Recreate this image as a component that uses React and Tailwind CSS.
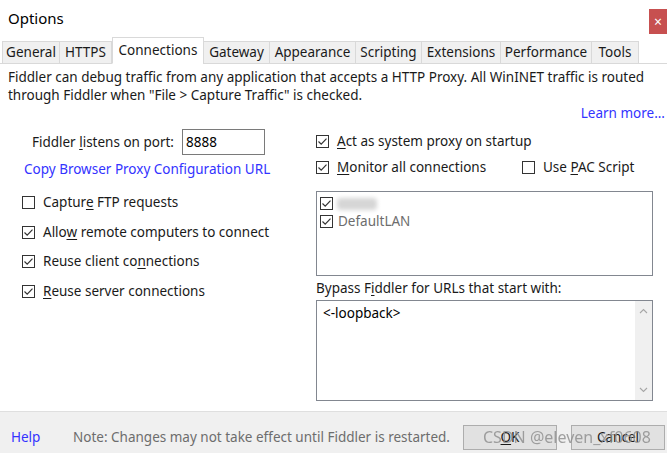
import React from 'react';

const FONT = { fontFamily: '"Noto Sans", "Open Sans", sans-serif' };

const TABS = [
  { name: 'General', w: 'w-[58px]' },
  { name: 'HTTPS', w: 'w-[53px]' },
  { name: 'Connections', w: 'w-[92px]', active: true },
  { name: 'Gateway', w: 'w-[67px]' },
  { name: 'Appearance', w: 'w-[87px]' },
  { name: 'Scripting', w: 'w-[67px]' },
  { name: 'Extensions', w: 'w-[80px]' },
  { name: 'Performance', w: 'w-[92px]' },
  { name: 'Tools', w: 'w-[48px]' },
];

// Classic Win10 checkbox: 13px square, thin tick
const CheckBox = ({ checked }) => (
  <svg width="13" height="13" viewBox="0 0 13 13" className="shrink-0">
    <rect x="0.5" y="0.5" width="12" height="12" fill="#fff" stroke="#333" />
    {checked && (
      <path d="M2.5 6.5 L5.2 9.2 L10.5 3.6" fill="none" stroke="#333" strokeWidth="1.2" />
    )}
  </svg>
);

const CheckRow = ({ checked, children, className = '' }) => (
  <div className={`flex items-center h-[18px] gap-[8px] ${className}`}>
    <CheckBox checked={checked} />
    <span className="text-[13.5px] text-[#1a1a1a] whitespace-nowrap">{children}</span>
  </div>
);

const U = ({ children }) => <span className="underline underline-offset-2">{children}</span>;

const Chevron = ({ up }) => (
  <svg width="9" height="6" viewBox="0 0 9 6">
    <path d={up ? 'M1 5 L4.5 1.5 L8 5' : 'M1 1 L4.5 4.5 L8 1'} fill="none" stroke="#a6a6a6" strokeWidth="1.1" />
  </svg>
);

export default function App() {
  return (
    <div className="w-[667px] h-[453px] bg-white flex flex-col relative overflow-hidden" style={FONT}>
      {/* Title bar */}
      <div className="h-[38px] flex justify-between shrink-0">
        <div className="pl-[8px] pt-[7px] text-[15px] text-black">Options</div>
        <div className="mt-[9px] w-[18px] h-[25px] bg-[#c75050] text-white text-[14px] flex items-center justify-center leading-none">
          ×
        </div>
      </div>

      {/* Tabs */}
      <div className="h-[26px] flex items-end pl-[2px] border-b border-[#d9d9d9] shrink-0">
        {TABS.map(t => (
          <div
            key={t.name}
            className={`${t.w} flex items-center justify-center text-[13.5px] text-[#1a1a1a] border border-[#d9d9d9] -mb-px ${
              t.active ? 'h-[27px] bg-white border-b-white' : 'h-[23px] bg-[#f0f0f0] -ml-px first:ml-0'
            }`}
          >
            {t.name}
          </div>
        ))}
      </div>

      {/* Body */}
      <div className="flex-1 flex flex-col">
        <div className="pl-[8px] pt-[4px] text-[13.5px] leading-[18px] text-[#1a1a1a] whitespace-nowrap">
          Fiddler can debug traffic from any application that accepts a HTTP Proxy. All WinINET traffic is routed
          <br />
          through Fiddler when "File &gt; Capture Traffic" is checked.
        </div>
        <div className="text-right pr-[2px] text-[13.5px] leading-[18px] text-[#3333ff]">Learn more...</div>

        <div className="flex mt-[7px]">
          {/* Left column */}
          <div className="w-[316px] flex flex-col">
            <div className="flex items-center h-[26px]">
              <div className="w-[174px] text-right text-[13.5px] text-[#1a1a1a]">
                Fiddler <U>l</U>istens on port:
              </div>
              <div className="ml-[8px] w-[83px] h-[26px] border border-[#7a7a7a] flex items-center pl-[3px] text-[13.5px] text-black">
                8888
              </div>
            </div>
            <div className="mt-[5px] pl-[24px] h-[18px] leading-[18px] text-[13.5px] text-[#3333ff] whitespace-nowrap">
              Copy Browser Proxy Configuration URL
            </div>
            <div className="pl-[22px] mt-[15px] flex flex-col gap-[12px]">
              <CheckRow checked={false}>Captur<U>e</U> FTP requests</CheckRow>
              <CheckRow checked>Allo<U>w</U> remote computers to connect</CheckRow>
              <CheckRow checked className="-mt-px">Reuse client co<U>n</U>nections</CheckRow>
              <CheckRow checked><U>R</U>euse server connections</CheckRow>
            </div>
          </div>

          {/* Right column */}
          <div className="w-[337px] flex flex-col">
            <CheckRow checked className="mt-[3px]"><U>A</U>ct as system proxy on startup</CheckRow>
            <div className="flex items-center mt-[8px]">
              <CheckRow checked className="w-[206px]"><U>M</U>onitor all connections</CheckRow>
              <CheckRow checked={false}>Use <U>P</U>AC Script</CheckRow>
            </div>

            <div className="mt-[15px] h-[85px] border border-[#828790] pl-[3px] pt-[4px] flex flex-col">
              <div className="flex items-center h-[15px] gap-[4px]">
                <CheckBox checked />
                <div className="w-[40px] h-[12px] rounded bg-[#d6d6d6] blur-[2px]" />
              </div>
              <div className="flex items-center h-[16px] gap-[5px] mt-[2px]">
                <CheckBox checked />
                <span className="text-[13.5px] text-[#6d6d6d]">DefaultLAN</span>
              </div>
            </div>

            <div className="mt-[3px] h-[18px] leading-[18px] text-[13.5px] text-[#1a1a1a] whitespace-nowrap">
              Bypass F<U>i</U>ddler for URLs that start with:
            </div>

            <div className="mt-[3px] h-[101px] border border-[#828790] flex">
              <div className="flex-1 pl-[6px] pt-[2px] text-[13.5px] text-black">&lt;-loopback&gt;</div>
              <div className="w-[17px] bg-[#f0f0f0] flex flex-col justify-between items-center py-[7px]">
                <Chevron up />
                <Chevron />
              </div>
            </div>
          </div>
        </div>
      </div>

      {/* Footer */}
      <div className="h-[42px] bg-[#f0f0f0] border-t border-[#dfdfdf] flex items-start pt-[13px] shrink-0">
        <div className="pl-[11px] w-[73px] mt-[3px] text-[13.5px] leading-[18px] text-[#3333ff]">Help</div>
        <div className="mt-[3px] text-[13.5px] leading-[18px] text-[#6d6d6d] whitespace-nowrap">
          Note: Changes may not take effect until Fiddler is restarted.
        </div>
        <div className="ml-auto flex gap-[14px] pr-[2px]">
          <div className="w-[94px] h-[25px] bg-[#e1e1e1] border border-[#adadad] flex items-center justify-center text-[13.5px] text-[#1a1a1a]">
            <U>O</U>K
          </div>
          <div className="w-[94px] h-[25px] bg-[#e1e1e1] border border-[#adadad] flex items-center justify-center text-[13.5px] text-[#1a1a1a]">
            Cancel
          </div>
        </div>
      </div>

      {/* Watermark over the buttons */}
      <div className="absolute left-[483px] top-[425px] text-[16px] text-[#8c8c8c] opacity-80 whitespace-nowrap pointer-events-none">
        CSDN @eleven_xf0608
      </div>
    </div>
  );
}
